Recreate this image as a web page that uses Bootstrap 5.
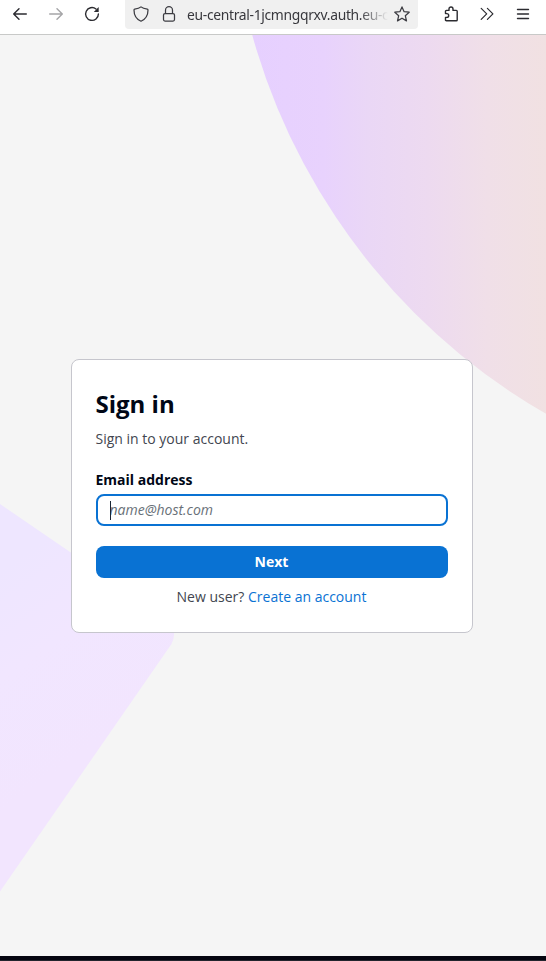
<!DOCTYPE html>
<html lang="en">
<head>
<meta charset="utf-8">
<meta name="viewport" content="width=device-width, initial-scale=1">
<title>Sign in</title>
<link href="https://cdn.jsdelivr.net/npm/bootstrap@5.3.0/dist/css/bootstrap.min.css" rel="stylesheet">
<style>
body { font-family: "Open Sans", "Noto Sans", sans-serif; font-size: 14px; line-height: 20px; color: #424650; }
.toolbar { height: 35px; padding: 0 15px 6px 12px; border-bottom: 1px solid #c8c9c8; background: #fff; }
.toolbar svg { display: block; flex: none; fill: none; stroke: #2b2b30; stroke-width: 1.4; stroke-linecap: round; stroke-linejoin: round; }
.tool { width: 16px; height: 16px; background: none; border: 0; padding: 0; margin-right: 20px; flex: none; }
.tool.off { opacity: .42; }
.urlbar { width: 293px; height: 30px; margin-left: 5px; padding: 0 8px; border-radius: 0 0 4px 4px; background: #f0f0f0; }
.toolbar .urlbar svg { stroke: #3c3c42; stroke-width: 1.25; }
.toolbar .lock { margin-left: 12px; }
.url { width: 201px; margin-left: 10px; font: 15px/28px "Noto Sans", sans-serif; letter-spacing: -.35px; color: #38383d; -webkit-mask-image: linear-gradient(90deg, #000 86%, transparent 100%); mask-image: linear-gradient(90deg, #000 86%, transparent 100%); }
.url span { display: inline-block; transform: scaleX(.925); transform-origin: 0 50%; }
.actions { width: 88px; }
.stage { background: #f5f5f5; isolation: isolate; padding-top: 324px; }
.backdrop { z-index: -1; }
.panel { width: 402px; height: 274px; margin-left: 71px; padding: 31px 24px 0; border: 1px solid #c6c6cd; border-radius: 8px; background: #fff; }
.panel h1 { font-size: 24px; line-height: 26px; font-weight: 700; color: #000716; margin: 0 0 12px -.5px; }
.panel label { font-weight: 700; color: #000716; margin: 21px 0 4px -.5px; }
.intro { margin: 0 0 0 -.5px; }
.email { height: 32px; border: 2px solid #0972d3; border-radius: 8px; padding: 0 11px 0 12px; }
.email input { font-size: 14px; line-height: 20px; margin-left: -.5px; }
.email input::placeholder { color: #687078; font-style: italic; opacity: 1; }
.caret { width: 1px; height: 19px; background: #192534; margin-right: -1px; z-index: 1; }
.btn-next { height: 32px; margin-top: 20px; padding: 0 1px 0 0; border: 0; border-radius: 8px; font-size: 14px; line-height: 20px; font-weight: 700; --bs-btn-color: #fff; --bs-btn-bg: #0972d3; }
.signup { margin-top: 9px; padding-right: 1px; }
.signup a { color: #0972d3; }
.bottom-edge { height: 5px; background: #050510; border-bottom: 1px solid #22242d; }
</style>
</head>
<body class="vh-100 d-flex flex-column overflow-hidden">
<header class="toolbar d-flex align-items-center flex-shrink-0">
  <button class="tool" aria-label="Back"><svg width="16" height="16" viewBox="0 0 16 16"><path d="M14.3 8H1.7M7 2.7 1.7 8 7 13.3"/></svg></button>
  <button class="tool off" aria-label="Forward"><svg width="16" height="16" viewBox="0 0 16 16"><path d="M1.7 8h12.6M9 2.7 14.3 8 9 13.3"/></svg></button>
  <button class="tool" aria-label="Reload"><svg width="16" height="16" viewBox="0 0 16 16"><path d="M14.4 8A6.4 6.4 0 1 1 12 3"/><path d="M14.7 1v4.9H9.8z" fill="#2b2b30" stroke="none"/></svg></button>
  <div class="urlbar d-flex align-items-center">
    <svg width="16" height="16" viewBox="0 0 16 16"><path d="M8 .9C6.5 2.2 4.1 2.9 1.7 3.2c-.5.1-.7.4-.7.8 0 5.1 2.1 9.1 7 11.2 4.9-2.1 7-6.1 7-11.2 0-.4-.2-.7-.7-.8C11.9 2.900 9.500 2.200 8 .9z"/></svg>
    <svg class="lock" width="16" height="16" viewBox="0 0 16 16"><rect x="2.500" y="7.500" width="11" height="7.500" rx="1.500"/><path d="M4.500 7.300V4.200a3.500 3.500 0 0 1 7 0v3.100"/></svg>
    <div class="url text-nowrap overflow-hidden"><span>eu-central-1jcmngqrxv.auth.eu-c</span></div>
    <svg class="ms-auto" width="16" height="16" viewBox="0 0 16 16"><path d="m8 .9 2.100 4.800 5.100.5-3.900 3.500 1.200 5.200L8 12.200l-4.500 2.700 1.200-5.200L.8 6.200l5.100-.5z"/></svg>
  </div>
  <div class="actions d-flex align-items-center justify-content-between ms-auto">
    <svg width="16" height="16" viewBox="0 0 16 16"><path d="M2.500 7.600V5.300c0-.6.300-.9.900-.9h2.600V3a2 2 0 0 1 4 0v1.400h3.300c.5 0 .9.300.9.900v8.600c0 .6-.4.900-.9.900H3.400c-.6 0-.9-.3-.9-.9v-2.500h1.300a1.900 1.900 0 0 0 0-3.800z"/></svg>
    <svg width="16" height="16" viewBox="0 0 16 16"><path stroke-width="1.200" d="m2.200 2.400 5.500 5.500-5.500 5.500M8.400 2.400l5.500 5.500-5.500 5.500"/></svg>
    <svg width="16" height="16" viewBox="0 0 16 16"><path d="M2.500 3.500h11M2.500 8h11M2.500 12.500h11"/></svg>
  </div>
</header>
<main class="stage position-relative flex-grow-1 overflow-hidden">
  <svg class="backdrop position-absolute top-0 start-0" width="546" height="921" viewBox="0 35 546 921" aria-hidden="true">
    <defs>
      <linearGradient id="arc" gradientUnits="userSpaceOnUse" x1="250" y1="0" x2="546" y2="0">
        <stop offset="0" stop-color="#e6d0ff"/><stop offset=".25" stop-color="#e8d2fd"/><stop offset=".4" stop-color="#ead7f6"/><stop offset=".6" stop-color="#eddaf0"/><stop offset=".8" stop-color="#f0dfe8"/><stop offset="1" stop-color="#f1e1e2"/>
      </linearGradient>
      <linearGradient id="tile" gradientUnits="userSpaceOnUse" x1="0" y1="570" x2="115" y2="730">
        <stop offset="0" stop-color="#eee6ff"/><stop offset=".45" stop-color="#f1e6ff"/><stop offset="1" stop-color="#f2e5fe"/>
      </linearGradient>
    </defs>
    <circle cx="862" cy="-134.500" r="632.900" fill="url(#arc)"/>
    <path d="M0 504 165 617Q179 629 171.500 644L0 891.500Z" fill="url(#tile)"/>
  </svg>
  <form class="panel">
    <h1>Sign in</h1>
    <p class="intro">Sign in to your account.</p>
    <label class="d-block" for="email">Email address</label>
    <div class="email d-flex align-items-center">
      <span class="caret"></span>
      <input id="email" type="email" class="form-control border-0 p-0 shadow-none bg-transparent" placeholder="name@host.com">
    </div>
    <button type="button" class="btn btn-next w-100 d-block">Next</button>
    <p class="signup mb-0 text-center">New user? <a href="#" class="text-decoration-none">Create an account</a></p>
  </form>
</main>
<footer class="bottom-edge flex-shrink-0"></footer>
<script src="https://cdn.jsdelivr.net/npm/bootstrap@5.3.0/dist/js/bootstrap.bundle.min.js"></script>
</body>
</html>
